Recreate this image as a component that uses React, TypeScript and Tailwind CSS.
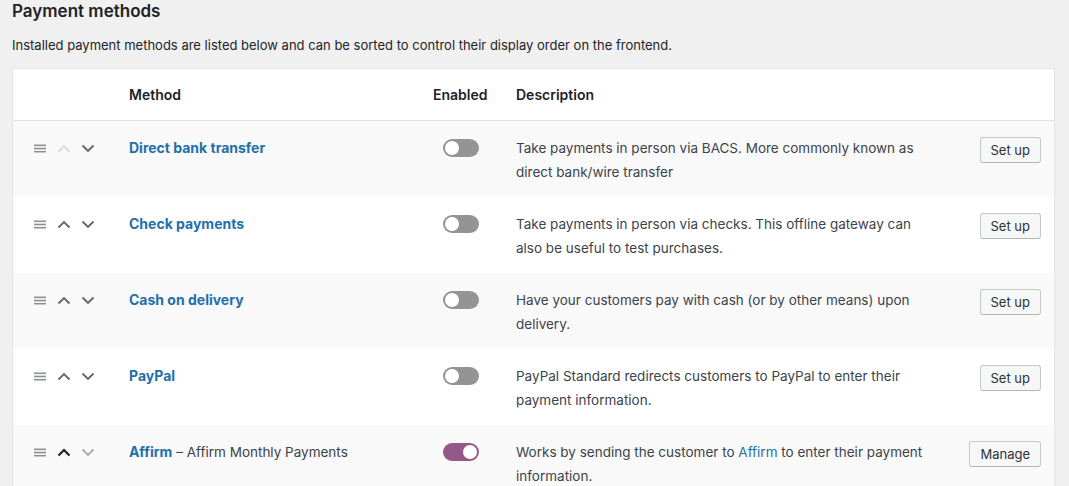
import React from 'react'

type ArrowState = 'disabled' | 'normal' | 'active' | 'muted'

type Method = {
  name: string
  suffix?: string
  enabled: boolean
  lines: React.ReactNode[]
  action: string
  upState: ArrowState
  downState: ArrowState
}

const methods: Method[] = [
  {
    name: 'Direct bank transfer',
    enabled: false,
    lines: ['Take payments in person via BACS. More commonly known as', 'direct bank/wire transfer'],
    action: 'Set up',
    upState: 'disabled',
    downState: 'normal',
  },
  {
    name: 'Check payments',
    enabled: false,
    lines: ['Take payments in person via checks. This offline gateway can', 'also be useful to test purchases.'],
    action: 'Set up',
    upState: 'normal',
    downState: 'normal',
  },
  {
    name: 'Cash on delivery',
    enabled: false,
    lines: ['Have your customers pay with cash (or by other means) upon', 'delivery.'],
    action: 'Set up',
    upState: 'normal',
    downState: 'normal',
  },
  {
    name: 'PayPal',
    enabled: false,
    lines: ['PayPal Standard redirects customers to PayPal to enter their', 'payment information.'],
    action: 'Set up',
    upState: 'normal',
    downState: 'normal',
  },
  {
    name: 'Affirm',
    suffix: 'Affirm Monthly Payments',
    enabled: true,
    lines: [
      <>
        Works by sending the customer to <span className="text-[#1f70aa]">Affirm</span> to enter their payment
      </>,
      'information.',
    ],
    action: 'Manage',
    upState: 'active',
    downState: 'muted',
  },
]

const chevronColor: Record<ArrowState, string> = {
  disabled: 'text-[#dcdcde]',
  normal: 'text-[#646970]',
  active: 'text-[#1d2327]',
  muted: 'text-[#a7aaad]',
}

function Chevron({ dir, state }: { dir: 'up' | 'down'; state: ArrowState }) {
  return (
    <svg width="14" height="9" viewBox="0 0 14 9" className={chevronColor[state]} fill="none">
      <path
        d={dir === 'up' ? 'M1.5 7.5L7 2l5.5 5.5' : 'M1.5 1.5L7 7l5.5-5.5'}
        stroke="currentColor"
        strokeWidth={state === 'active' ? 2.2 : 1.9}
      />
    </svg>
  )
}

function DragHandle() {
  return (
    <svg width="12" height="9" viewBox="0 0 12 9" className="text-[#8c8f94]">
      <rect x="0" y="0.5" width="12" height="1.6" fill="currentColor" />
      <rect x="0" y="3.7" width="12" height="1.6" fill="currentColor" />
      <rect x="0" y="6.9" width="12" height="1.6" fill="currentColor" />
    </svg>
  )
}

function Toggle({ on }: { on: boolean }) {
  return (
    <div
      className={`flex h-[18px] w-[36px] items-center rounded-full px-[2px] ${
        on ? 'justify-end bg-[#96588a]' : 'justify-start bg-[#949494]'
      }`}
    >
      <div className="h-[14px] w-[14px] rounded-full bg-white" />
    </div>
  )
}

export default function App() {
  return (
    <div
      className="min-h-[486px] bg-[#f0f0f1] px-[12px] text-[#3c434a]"
      style={{ fontFamily: 'Inter, "Noto Sans", sans-serif' }}
    >
      <h2 className="text-[17px] font-semibold leading-[22px] text-[#1d2327]">Payment methods</h2>
      <p className="mt-[14px] text-[13px] leading-[18px] text-[#1d2327]">
        Installed payment methods are listed below and can be sorted to control their display order on the frontend.
      </p>

      <div className="mt-[14px] mr-[2px] border border-[#e4e4e4] bg-white">
        {/* Header */}
        <div className="flex h-[52px] items-center border-b border-[#e1e1e1] text-[14px] font-semibold text-[#1d2327]">
          <div className="w-[116px]" />
          <div className="w-[304px]">Method</div>
          <div className="w-[83px]">Enabled</div>
          <div>Description</div>
        </div>

        {methods.map((m, i) => (
          <div
            key={m.name}
            className={`flex h-[76px] items-start pt-[15px] text-[13.5px] leading-[24px] ${
              i % 2 === 0 ? 'bg-[#f9f9f9]' : 'bg-white'
            }`}
          >
            <div className="flex h-[24px] w-[116px] items-center pl-[21px]">
              <DragHandle />
              <div className="ml-[11px]">
                <Chevron dir="up" state={m.upState} />
              </div>
              <div className="ml-[10px]">
                <Chevron dir="down" state={m.downState} />
              </div>
            </div>
            <div className="w-[304px]">
              <span className="text-[14px] font-bold text-[#1f70aa]">{m.name}</span>
              {m.suffix && <span className="text-[#3c434a]"> – {m.suffix}</span>}
            </div>
            <div className="flex h-[24px] w-[83px] items-center pl-[10px]">
              <Toggle on={m.enabled} />
            </div>
            <div className="w-[430px] text-[#3c434a]">
              {m.lines.map((l, j) => (
                <div key={j} className="whitespace-nowrap">
                  {l}
                </div>
              ))}
            </div>
            <div className="flex flex-1 justify-end pr-[13px]">
              <button className="mt-[1px] h-[26px] rounded-[3px] border border-[#c7c7c7] border-b-[#b5b5b5] bg-[#f6f7f7] px-[10px] text-[13px] leading-[24px] text-[#2c3338]">
                {m.action}
              </button>
            </div>
          </div>
        ))}
      </div>
    </div>
  )
}
